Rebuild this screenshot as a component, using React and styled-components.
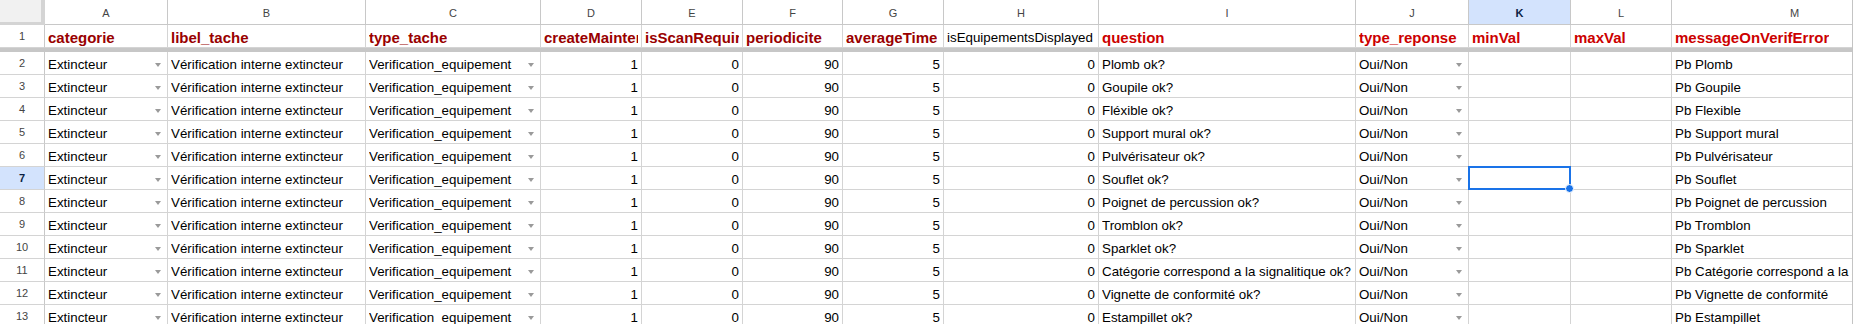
import React from "react";
import styled, { createGlobalStyle, css } from "styled-components";

const GlobalStyle = createGlobalStyle`
  html, body { margin: 0; padding: 0; background: #fff; overflow: hidden; }
  body { font-family: "Liberation Sans", Arial, sans-serif; }
`;

const COLS = [
  { key: "A", w: 123 },
  { key: "B", w: 198 },
  { key: "C", w: 175 },
  { key: "D", w: 101 },
  { key: "E", w: 101 },
  { key: "F", w: 100 },
  { key: "G", w: 101 },
  { key: "H", w: 155 },
  { key: "I", w: 257 },
  { key: "J", w: 113 },
  { key: "K", w: 102 },
  { key: "L", w: 101 },
  { key: "M", w: 246 },
];

const HEADERS = [
  { text: "categorie", tone: "dark" },
  { text: "libel_tache", tone: "dark" },
  { text: "type_tache", tone: "dark" },
  { text: "createMaintenance", tone: "dark" },
  { text: "isScanRequired", tone: "dark" },
  { text: "periodicite", tone: "dark" },
  { text: "averageTime", tone: "dark" },
  { text: "isEquipementsDisplayed", tone: "plain" },
  { text: "question", tone: "bright" },
  { text: "type_reponse", tone: "bright" },
  { text: "minVal", tone: "bright" },
  { text: "maxVal", tone: "bright" },
  { text: "messageOnVerifError", tone: "bright" },
];

const QA = [
  ["Plomb ok?", "Pb Plomb"],
  ["Goupile ok?", "Pb Goupile"],
  ["Fléxible ok?", "Pb Flexible"],
  ["Support mural ok?", "Pb Support mural"],
  ["Pulvérisateur ok?", "Pb Pulvérisateur"],
  ["Souflet ok?", "Pb Souflet"],
  ["Poignet de percussion ok?", "Pb Poignet de percussion"],
  ["Tromblon ok?", "Pb Tromblon"],
  ["Sparklet ok?", "Pb Sparklet"],
  ["Catégorie correspond a la signalitique ok?", "Pb Catégorie correspond a la signalitique"],
  ["Vignette de conformité ok?", "Pb Vignette de conformité"],
  ["Estampillet ok?", "Pb Estampillet"],
];

const SELECTED_COL = "K";
const SELECTED_ROW = 7;

const Frame = styled.div`
  width: 1852px;
  height: 324px;
  overflow: hidden;
  border-right: 1px solid #c4c4c4;
  position: relative;
`;

const Grid = styled.div`
  display: grid;
  grid-template-columns: 45px ${COLS.map((c) => c.w + "px").join(" ")};
  grid-template-rows: 25px 23px 4px repeat(12, 23px);
  width: max-content;
`;

const Corner = styled.div`
  box-sizing: border-box;
  background: #f1f1f1;
  border-right: 4px solid #d4d4d4;
  border-bottom: 3px solid #d4d4d4;
`;

const ColHeader = styled.div`
  box-sizing: border-box;
  display: flex;
  align-items: center;
  justify-content: center;
  font-size: 11px;
  color: #444;
  background: #fff;
  border-right: 1px solid #c8c8c8;
  border-bottom: 1px solid #c8c8c8;
  padding-top: 1px;
  ${(p) =>
    p.$selected &&
    css`
      background: #d3e3fd;
      color: #0b1f44;
      font-weight: bold;
    `}
`;

const RowHeader = styled.div`
  box-sizing: border-box;
  display: flex;
  align-items: center;
  justify-content: center;
  font-size: 11px;
  color: #444;
  background: #fff;
  border-right: 1px solid #c8c8c8;
  border-bottom: 1px solid #d4d4d4;
  ${(p) =>
    p.$selected &&
    css`
      background: #d3e3fd;
      color: #0b1f44;
      font-weight: bold;
    `}
`;

const Divider = styled.div`
  grid-column: 1 / -1;
  background: #c7c7c7;
`;

const Cell = styled.div`
  box-sizing: border-box;
  position: relative;
  display: flex;
  align-items: flex-end;
  justify-content: ${(p) => (p.$align === "right" ? "flex-end" : "flex-start")};
  padding: 0 ${(p) => (p.$dropdown ? "6px" : "3px")} 1px 3px;
  border-right: 1px solid #d4d4d4;
  border-bottom: 1px solid #d4d4d4;
  font-size: 13.33px;
  line-height: 16px;
  color: #000;
  white-space: nowrap;
  min-width: 0;
`;

const CellText = styled.span`
  overflow: hidden;
  flex: 1 1 auto;
  min-width: 0;
  text-align: ${(p) => (p.$align === "right" ? "right" : "left")};
`;

const TONES = {
  dark: "#990000",
  bright: "#cc0000",
  plain: "#000",
};

const HeaderCell = styled.div`
  box-sizing: border-box;
  display: flex;
  align-items: flex-end;
  padding: 0 3px 1px 3px;
  border-right: 1px solid #d4d4d4;
  border-bottom: 1px solid #d4d4d4;
  color: ${(p) => TONES[p.$tone]};
  font-size: ${(p) => (p.$tone === "plain" ? "13.33px" : "15px")};
  line-height: ${(p) => (p.$tone === "plain" ? "16px" : "17px")};
  font-weight: ${(p) => (p.$tone === "plain" ? "normal" : "bold")};
  white-space: nowrap;
  overflow: hidden;
  min-width: 0;
`;

const HeaderText = styled.span`
  display: block;
  overflow: hidden;
  min-width: 0;
  max-width: 100%;
`;

const DropArrow = styled.span`
  flex: 0 0 auto;
  width: 0;
  height: 0;
  margin-bottom: 6px;
  border-left: 3.5px solid transparent;
  border-right: 3.5px solid transparent;
  border-top: 4px solid #9a9a9a;
`;

const Selection = styled.div`
  position: absolute;
  left: -1px;
  top: -1px;
  right: -1px;
  bottom: -1px;
  border: 2px solid #1a73e8;
  pointer-events: none;
  z-index: 2;
`;

const Handle = styled.div`
  position: absolute;
  right: -5px;
  bottom: -5px;
  width: 7px;
  height: 7px;
  border-radius: 50%;
  background: #1a73e8;
  border: 1px solid #fff;
  z-index: 3;
`;

function DataCell({ value, align, dropdown, selected }) {
  return (
    <Cell $align={align} $dropdown={dropdown}>
      <CellText $align={align}>{value}</CellText>
      {dropdown && <DropArrow />}
      {selected && (
        <Selection>
          <Handle />
        </Selection>
      )}
    </Cell>
  );
}

export default function App() {
  const rows = QA.map(([q, m], i) => ({
    n: i + 2,
    A: "Extincteur",
    B: "Vérification interne extincteur",
    C: "Verification_equipement",
    D: "1",
    E: "0",
    F: "90",
    G: "5",
    H: "0",
    I: q,
    J: "Oui/Non",
    K: "",
    L: "",
    M: m,
  }));

  const spec = {
    A: { dropdown: true },
    C: { dropdown: true },
    D: { align: "right" },
    E: { align: "right" },
    F: { align: "right" },
    G: { align: "right" },
    H: { align: "right" },
    J: { dropdown: true },
  };

  return (
    <>
      <GlobalStyle />
      <Frame>
        <Grid>
          <Corner />
          {COLS.map((c) => (
            <ColHeader key={c.key} $selected={c.key === SELECTED_COL}>
              {c.key}
            </ColHeader>
          ))}

          <RowHeader>1</RowHeader>
          {HEADERS.map((h) => (
            <HeaderCell key={h.text} $tone={h.tone}>
              <HeaderText>{h.text}</HeaderText>
            </HeaderCell>
          ))}

          <Divider />

          {rows.map((r) => (
            <React.Fragment key={r.n}>
              <RowHeader $selected={r.n === SELECTED_ROW}>{r.n}</RowHeader>
              {COLS.map((c) => (
                <DataCell
                  key={c.key}
                  value={r[c.key]}
                  align={spec[c.key]?.align}
                  dropdown={spec[c.key]?.dropdown}
                  selected={r.n === SELECTED_ROW && c.key === SELECTED_COL}
                />
              ))}
            </React.Fragment>
          ))}
        </Grid>
      </Frame>
    </>
  );
}
